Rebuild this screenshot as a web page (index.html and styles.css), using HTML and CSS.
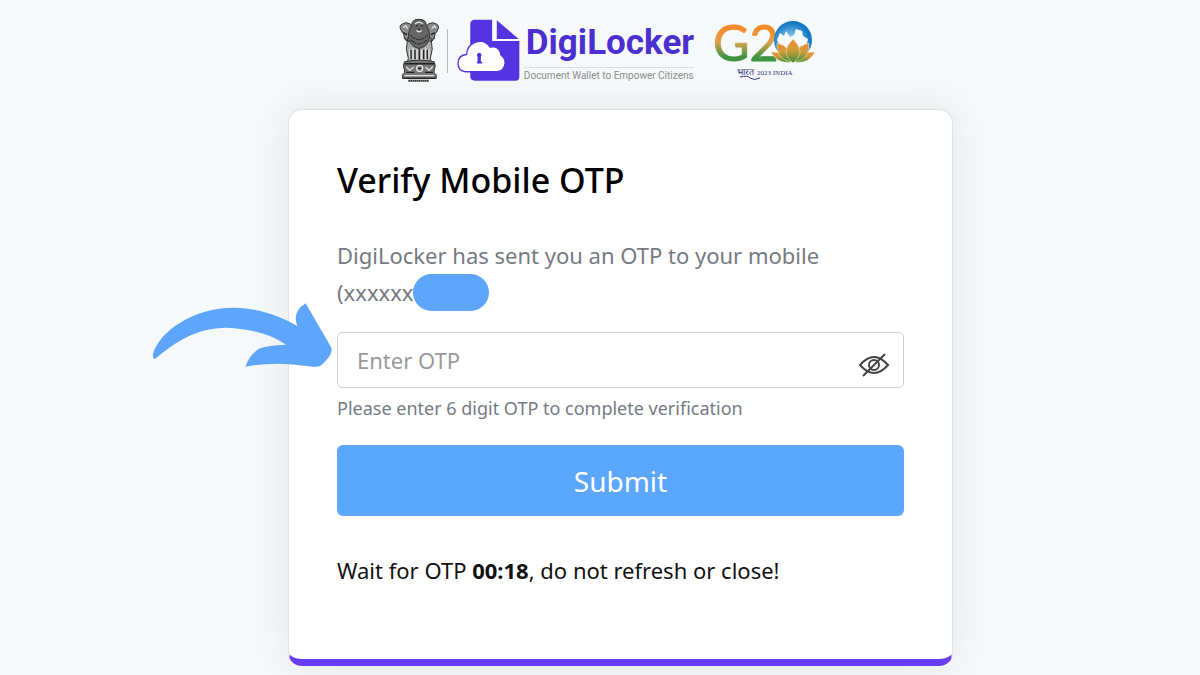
FILE: index.html
```html
<!DOCTYPE html>
<html lang="en">
<head>
  <meta charset="UTF-8" />
  <meta name="viewport" content="width=device-width, initial-scale=1.0"/>
  <title>Verify Mobile OTP</title>
  <link rel="stylesheet" href="styles.css">
</head>
<body>
  <div class="page">
    <header class="logos">
      <svg class="emblem" viewBox="28 24 120 196" role="img" aria-label="State Emblem of India">
        <g fill="#8a8a8a" stroke="#333" stroke-width="3">
          <path d="M34 60q-8-12 4-18 10-8 24 0l8 10-4 36-14 6q-12-10-10-22-6-4-8-12zM144 60q8-12-4-18-10-8-24 0l-8 10 4 36 14 6q12-10 10-22 6-4 8-12z"/>
          <path d="M54 84l-4 34 6 28-4 12h74l-4-12 6-28-4-34z" fill="#aaa"/>
          <path d="M66 46q0-18 22-18t22 18q14 24 8 44-8 22-30 26-22-4-30-26-6-20 8-44z" fill="#666"/>
          <path d="M44 156q-6 14 0 24 4 10-6 16v10h102v-10q-10-6-6-16 6-10 0-24-45-10-90 0z" fill="#777"/>
        </g>
        <g fill="none" stroke="#e4e4e4" stroke-width="4">
          <path d="M60 118v28M70 114v36M82 120v30M96 120v30M108 114v36M118 118v28"/>
          <path d="M40 52l8-4 6 8M126 56l8-8 6 6M76 42q12-10 24 0M80 62q8 7 16 0"/>
          <circle cx="90" cy="176" r="9"/>
          <path d="M50 172l10 10 12-10M108 172l10 10 12-12M44 198h90"/>
        </g>
        <g fill="none" stroke="#222" stroke-width="4">
          <path d="M78 48h6M94 48h6M86 58h5M40 68l12 6M136 68l-12 6M64 120v28M76 120v28M89 118v32M102 120v28M113 120v28M46 162h88M86 176h8"/>
          <path d="M62 76q26 26 52 0M64 90q24 24 48 0M44 84q6 10 14 10M134 84q-6 10-14 10" stroke-dasharray="4 3"/>
          <path d="M50 188h24M106 188h24M40 206h98"/>
        </g>
        <path d="M56 213h62" stroke="#333" stroke-width="6" stroke-dasharray="5 1"/>
      </svg>
      <span class="divider"></span>
      <div class="digilocker">
        <svg class="file" viewBox="200 28 190 190" aria-hidden="true">
          <path d="M254 30h52v64h82v108q0 12-12 12H254q-14 0-14-14V44q0-14 14-14z" fill="#5434e0"/>
          <path d="M320 32l66 56h-66z" fill="#5434e0"/>
          <path d="M226 187q-23-3-23-25 0-25 26-27 2-28 24-36 30-12 47 14 28-6 33 25 13 7 12 24-2 23-24 25z" fill="#fff" stroke="#5434e0" stroke-width="4"/>
          <path d="M262 142a7 7 0 1 1 10 0v15h4v5h-16v-5h2z" fill="#5434e0"/>
        </svg>
        <div class="wordmark">
          <span class="brand">DigiLocker</span>
          <span class="tagline">Document Wallet to Empower Citizens</span>
        </div>
      </div>
      <svg class="g20" viewBox="0 0 104 64" role="img" aria-label="G20 India 2023">
        <defs>
          <linearGradient id="tricolour" x1="0" y1="0" x2="0" y2="1">
            <stop offset="0.3" stop-color="#f58a2c"/>
            <stop offset="0.5" stop-color="#dfa24c"/>
            <stop offset="0.75" stop-color="#3f9443"/>
          </linearGradient>
          <radialGradient id="globe" cx="0.45" cy="0.55">
            <stop offset="0" stop-color="#b9e4f7"/>
            <stop offset="1" stop-color="#1479c4"/>
          </radialGradient>
          <linearGradient id="petal" x1="0" y1="0" x2="0" y2="1">
            <stop offset="0" stop-color="#ee8a36"/>
            <stop offset="0.45" stop-color="#d39c38"/>
            <stop offset="1" stop-color="#3f8f3a"/>
          </linearGradient>
        </defs>
        <text class="g20-text" x="1" y="43" fill="url(#tricolour)" stroke="url(#tricolour)">G2</text>
        <circle cx="81" cy="22" r="19" fill="url(#globe)"/>
        <path d="M65 22l3-7 4 3 2-5 4 6 4-2 2-6 6 2 1 5 5 3-2 9-5-2-4 4-7-3-7 3-4-6z" fill="#f4fbfe"/>
        <g fill="url(#petal)" stroke="#f7efd2" stroke-width="0.5">
          <path d="M59 34q13-1 20 10-14 2-20-10zM103 34q-13-1-20 10 14 2 20-10z"/>
          <path d="M65 25q14 3 15 19-16-2-15-19zM97 25q-14 3-15 19 16-2 15-19z"/>
          <path d="M81 21q14 14 0 24-14-10 0-24z"/>
        </g>
        <text class="g20-hindi" x="25" y="57" lang="hi">भारत</text>
        <path d="M28 59q8-2 10 1 4 3 10 0" fill="none" stroke="#34377e"/>
        <text class="g20-caption" x="45" y="57">2023 INDIA</text>
      </svg>
    </header>

    <main class="card">
      <h1>Verify Mobile OTP</h1>
      <p class="message">DigiLocker has sent you an OTP to your mobile <span class="number">(xxxxxx<span class="redacted"></span></span></p>

      <form>
        <div class="field">
          <svg class="arrow" viewBox="36 38 543 195" aria-hidden="true">
            <path d="M45 206Q37 205 39 190C60 120 165 50 285 52C365 55 425 80 472 107Q455 65 497 39L573 170Q579 184 566 201Q550 222 538 228Q525 231 505 228Q410 212 316 229Q330 190 360 174Q385 165 438 163Q375 118 260 112C170 112 105 155 45 206z" fill="#5ea6fb"/>
          </svg>
          <input type="text" id="otp" placeholder="Enter OTP" aria-label="Enter OTP" />
          <button type="button" class="toggle" aria-label="Show OTP">
            <svg viewBox="0 0 32 26" fill="none" stroke="#444" stroke-width="2">
              <path d="M2 13Q16-3 30 13Q16 29 2 13z"/>
              <circle cx="16" cy="13" r="5"/>
              <path d="M5 24L27 2"/>
            </svg>
          </button>
        </div>
        <label class="hint" for="otp">Please enter 6 digit OTP to complete verification</label>
        <button type="submit" class="submit">Submit</button>
      </form>

      <p class="timer">Wait for OTP <strong>00:18</strong>, do not refresh or close!</p>
    </main>
  </div>
</body>
</html>
```

FILE: styles.css
```css
* {
  box-sizing: border-box;
}

body {
  margin: 0;
  background-color: #f6f9f9;
  color: #111;
  font-family: "Noto Sans", "Open Sans", sans-serif;
}

.page {
  padding: 18px 0 9px 41px;
}

.logos {
  display: flex;
  justify-content: center;
  align-items: flex-start;
  height: 91px;
  margin-right: 26px;
}

.emblem {
  width: 40px;
  height: 65px;
}

.divider {
  width: 1px;
  height: 44px;
  margin: 11px 9px 0 8px;
  background-color: #b5b9bd;
}

.digilocker {
  display: flex;
}

.file {
  width: 63px;
  height: 63px;
  margin-top: 1px;
}

.wordmark {
  display: flex;
  flex-direction: column;
  margin-left: 4px;
  font-family: Roboto, "Liberation Sans", sans-serif;
  white-space: nowrap;
}

.brand {
  height: 49px;
  padding-left: 2px;
  color: #4b2fcf;
  font-size: 35px;
  font-weight: bold;
  line-height: 50px;
}

.tagline {
  border-top: 1px solid #dcdfe2;
  color: #8b8e91;
  font-size: 10px;
  line-height: 15px;
}

.g20 {
  width: 104px;
  height: 64px;
  margin-left: 18px;
  overflow: visible;
}

.g20-text {
  font-family: Lato, sans-serif;
  font-size: 50px;
}

.g20-hindi,
.g20-caption {
  fill: #34377e;
  font-family: "Liberation Serif", serif;
  font-size: 7px;
}

.g20-hindi {
  font-size: 9px;
}

.card {
  max-width: 665px;
  margin: 0 auto;
  padding: 44px 48px 71px;
  background-color: #fff;
  border: 1px solid #e0e3e5;
  border-bottom: 7px solid #693cf5;
  border-radius: 14px;
  box-shadow: 0 0 44px rgba(40, 70, 80, 0.09);
}

h1 {
  margin: 0 0 31px;
  color: #000;
  font-size: 34px;
  font-weight: 500;
  line-height: 52px;
}

.message {
  margin: 0 0 21px;
  color: #757a82;
  font-size: 22px;
  line-height: 37px;
}

.number {
  white-space: nowrap;
}

.redacted {
  display: inline-block;
  width: 76px;
  height: 37px;
  border-radius: 19px;
  background-color: #5ea6fb;
  vertical-align: top;
}

.field {
  position: relative;
}

.field input {
  display: block;
  width: 100%;
  height: 56px;
  padding: 0 60px 0 19px;
  border: 1px solid #ced1d4;
  border-radius: 5px;
  color: #333;
  font-family: inherit;
  font-size: 22px;
}

.field input::placeholder {
  color: #9a9a9a;
}

.toggle {
  position: absolute;
  top: 20px;
  right: 14px;
  width: 32px;
  height: 26px;
  padding: 0;
  border: none;
  background: none;
  cursor: pointer;
}

.toggle svg {
  display: block;
}

.arrow {
  position: absolute;
  top: -29px;
  left: -185px;
  width: 181px;
  height: 65px;
}

.hint {
  display: block;
  margin: 5px 0 22px;
  color: #757a82;
  font-size: 18px;
  line-height: 30px;
}

.submit {
  display: block;
  width: 100%;
  height: 71px;
  border: none;
  border-radius: 6px;
  background-color: #5aa7fd;
  color: #fff;
  font-family: inherit;
  font-size: 28px;
  cursor: pointer;
}

.timer {
  margin: 36px 0 0;
  font-size: 22px;
  line-height: 36px;
}
```
